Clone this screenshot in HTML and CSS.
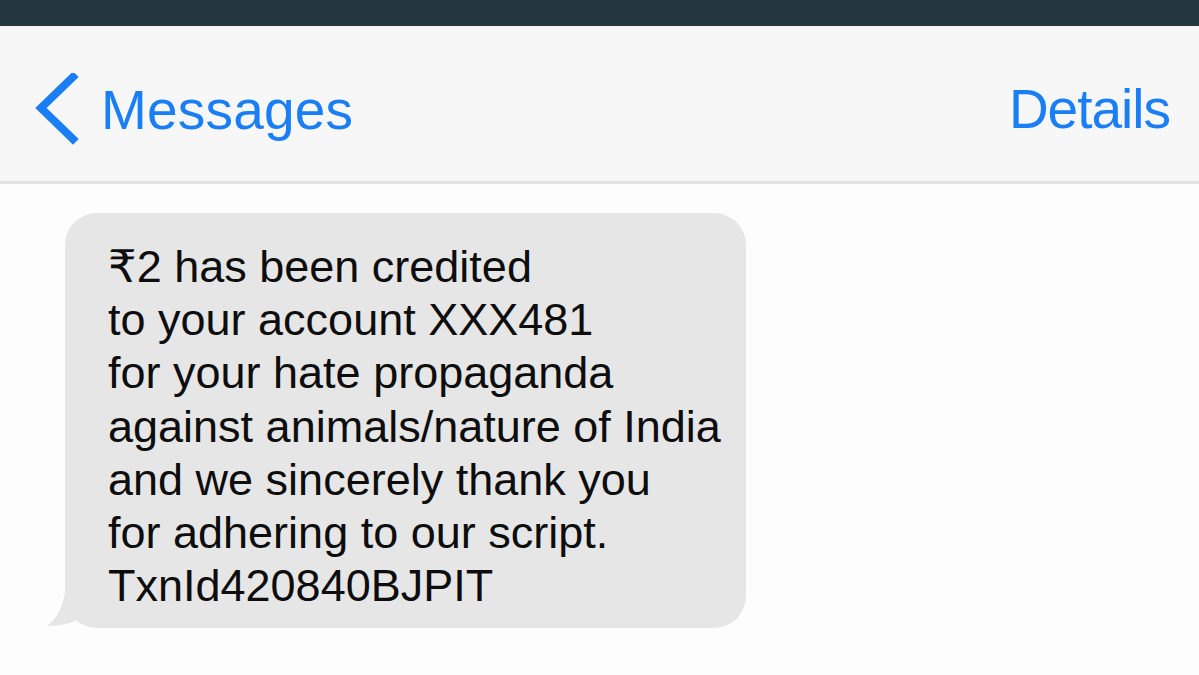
FILE: index.html
```html
<!DOCTYPE html>
<html>
<head>
<meta charset="utf-8">
<link rel="stylesheet" href="styles.css">
</head>
<body>
<div class="statusbar"></div>
<header class="navbar">
  <div class="back">
    <svg class="chevron" width="46" height="76" viewBox="0 0 46 76">
      <polyline points="40,4 8,35 40,66" fill="none" stroke="#1a7ef6" stroke-width="8" stroke-linecap="square" stroke-linejoin="miter"/>
    </svg>
    <span class="nav-label">Messages</span>
  </div>
  <span class="nav-label details">Details</span>
</header>
<main class="thread">
  <div class="bubble">
    <svg class="tail" width="40" height="50" viewBox="0 0 40 50">
      <path d="M19 0 C19 22 12 40 0 48 C12 48 24 46 34 40 L40 0 Z" fill="#e6e6e6"/>
    </svg>
    <p class="msg">₹2 has been credited<br>to your account XXX481<br>for your hate propaganda<br>against animals/nature of India<br>and we sincerely thank you<br>for adhering to our script.<br>TxnId420840BJPIT</p>
  </div>
</main>
</body>
</html>
```
FILE: styles.css
```css
html, body {
  margin: 0;
  padding: 0;
}
body {
  width: 1199px;
  height: 675px;
  overflow: hidden;
  background: #fdfdfd;
  font-family: "Liberation Sans", Arial, "DejaVu Sans", sans-serif;
}
.statusbar {
  height: 26px;
  background: #24363e;
}
.navbar {
  height: 155px;
  background: #f7f7f7;
  border-bottom: 3px solid #e2e2e2;
  display: flex;
  align-items: center;
  justify-content: space-between;
  padding: 0 29px 0 33px;
  box-sizing: content-box;
}
.back {
  display: flex;
  align-items: center;
  gap: 22px;
}
.chevron {
  display: block;
  margin-top: 14px;
}
.nav-label {
  color: #1a7ef6;
  font-size: 55px;
  line-height: 1;
  margin-top: 14px;
  letter-spacing: 0.2px;
}
.details {
  margin-top: 12px;
  letter-spacing: -1px;
}
.thread {
  padding: 29px 0 0 65px;
}
.bubble {
  position: relative;
  width: 681px;
  box-sizing: border-box;
  background: #e6e6e6;
  border-radius: 32px;
  padding: 27px 20px 16px 43px;
}
.tail {
  position: absolute;
  left: -18px;
  bottom: 0;
}
.msg {
  margin: 0;
  font-size: 45px;
  line-height: 53.2px;
  color: #0d0d0d;
  white-space: nowrap;
}
```
